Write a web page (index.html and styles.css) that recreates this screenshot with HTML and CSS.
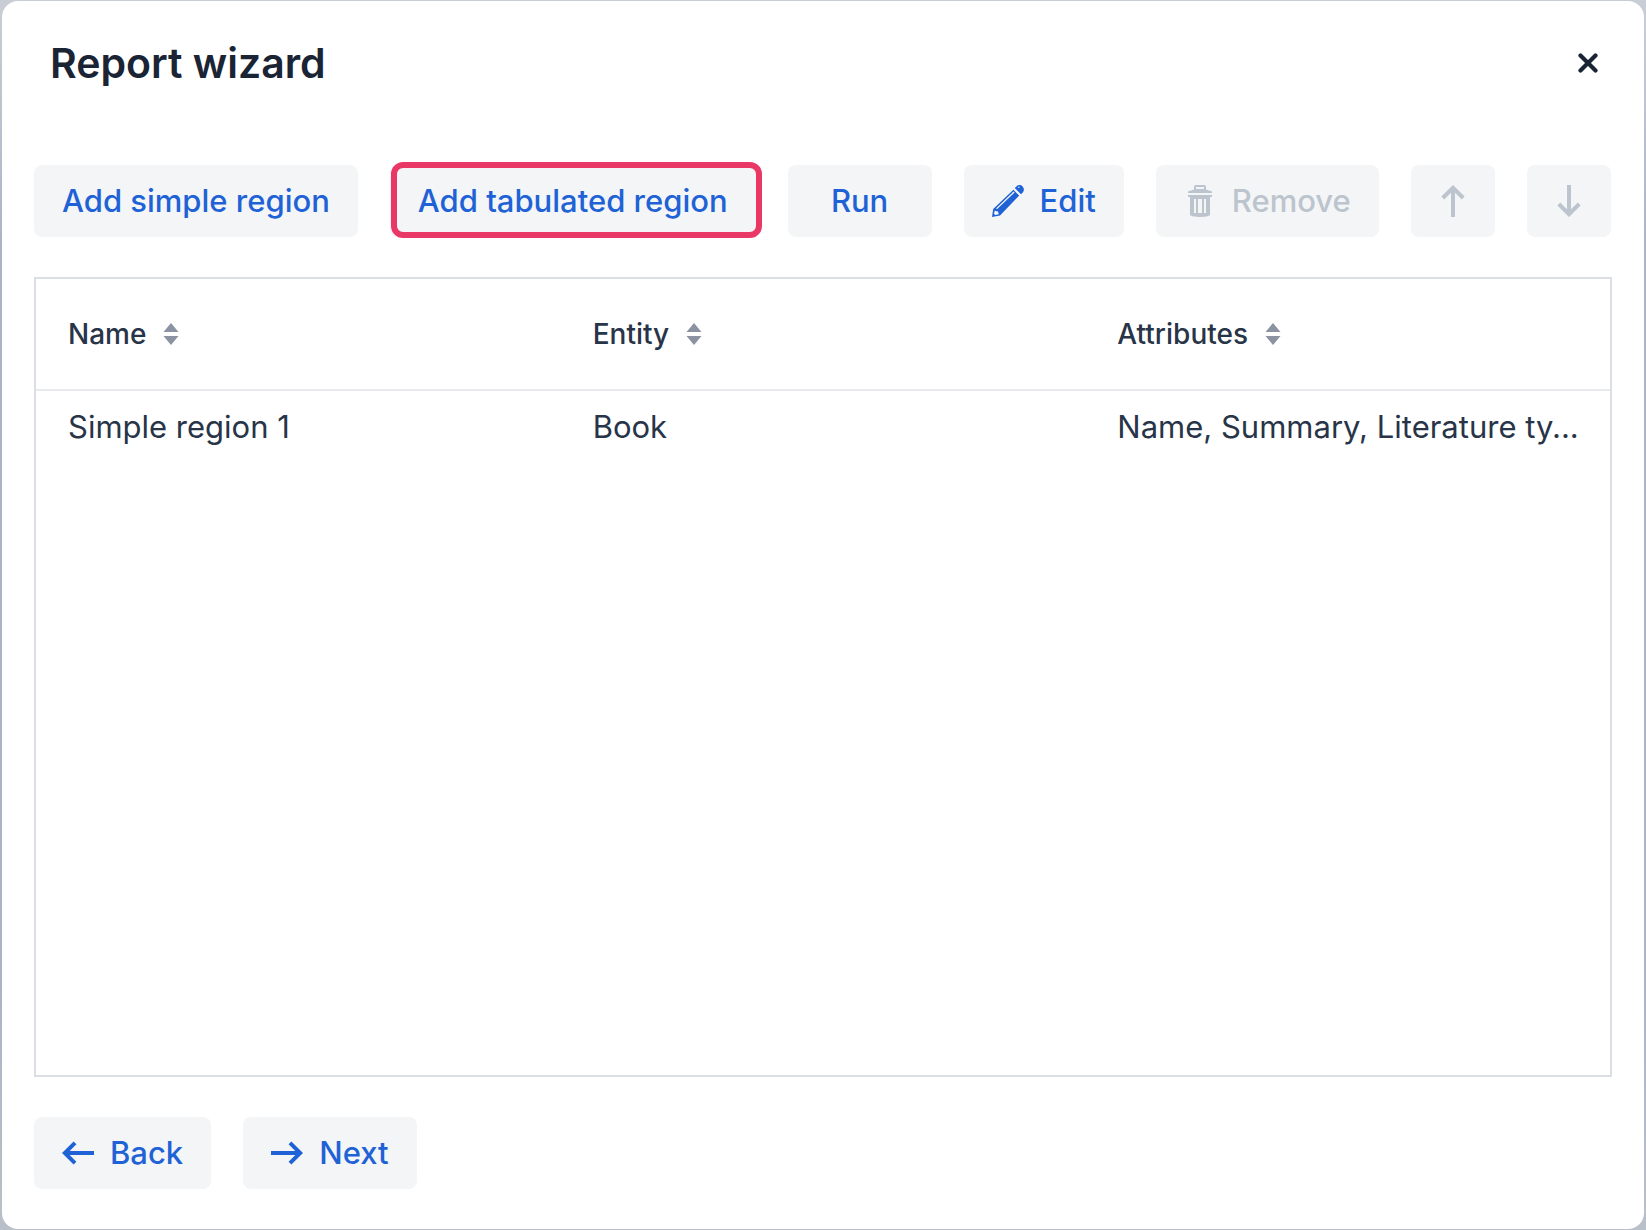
FILE: index.html
```
<!DOCTYPE html>
<html lang="en">
<head>
<meta charset="utf-8">
<meta name="viewport" content="width=device-width, initial-scale=1">
<title>Report wizard</title>
<link rel="stylesheet" href="styles.css">
</head>
<body>
<main class="dialog" role="dialog" aria-labelledby="dialog-title">
  <header class="dialog-header">
    <h1 class="dialog-title" id="dialog-title">Report wizard</h1>
    <button class="close" type="button" aria-label="Close">
      <svg class="close-icon" viewBox="0 0 20 20" aria-hidden="true"><path d="M2.500 2.500L17.500 17.500M17.500 2.500L2.500 17.500" fill="none" stroke="currentColor" stroke-width="4.200" stroke-linecap="round"/></svg>
    </button>
  </header>

  <div class="toolbar">
    <button class="button" type="button">Add simple region</button>
    <button class="button highlighted" type="button">Add tabulated region</button>
    <button class="button" type="button">Run</button>
    <button class="button" type="button">
      <svg class="icon" viewBox="0 0 16 16" aria-hidden="true"><path fill="currentColor" fill-rule="evenodd" d="M0 16L.6 12L10.700 2.400L13.600 5.300L4 15.300ZM1.400 12.700L1 14.400L1.600 15L3.400 14.600L3 13.200L1.900 13ZM2 11.800L2.600 12L11.300 3.800L10.800 3.300Z"/><path fill="currentColor" fill-rule="evenodd" d="M11.400 1.500L12.300 .6C13.200-.2 14.500 -.1 15.300 .8C16.100 1.600 16.200 2.800 15.400 3.700L14.500 4.600ZM13 1.400L13.900 1.200L13.600 .7L12.900 1Z"/></svg>
      Edit
    </button>
    <button class="button" type="button" disabled>
      <svg class="icon" viewBox="0 0 16 16" aria-hidden="true"><path fill="currentColor" fill-rule="evenodd" d="M2 5H14V6H13V15C12 16.300 4 16.300 3 15V6H2ZM5 7V14H6V7ZM7 7V14H9V7ZM10 7V14H11V7Z"/><path fill="currentColor" fill-rule="evenodd" d="M2 4V3.200L5 2.200V1Q5 0 6 0H10Q11 0 11 1V2.200L14 3.200V4ZM6 2H10V1H6Z"/></svg>
      Remove
    </button>
    <button class="button icon-only" type="button" aria-label="Move up" disabled>
      <svg class="icon" viewBox="0 0 16 16" aria-hidden="true"><path fill="none" stroke="currentColor" stroke-width="2" d="M8 16V1.400M2.900 6.500L8 1.400L13.100 6.500"/></svg>
    </button>
    <button class="button icon-only" type="button" aria-label="Move down" disabled>
      <svg class="icon" viewBox="0 0 16 16" aria-hidden="true"><path fill="none" stroke="currentColor" stroke-width="2" d="M8 0V14.600M2.900 9.500L8 14.600L13.100 9.500"/></svg>
    </button>
  </div>

  <div class="grid">
    <table class="regions">
      <thead>
        <tr>
          <th scope="col"><span class="sorter">Name <svg class="sort-icon" viewBox="0 0 16 22" aria-hidden="true"><path fill="currentColor" d="M8 0L15.500 9H.5ZM8 22L.5 13H15.500Z"/></svg></span></th>
          <th scope="col"><span class="sorter">Entity <svg class="sort-icon" viewBox="0 0 16 22" aria-hidden="true"><path fill="currentColor" d="M8 0L15.500 9H.5ZM8 22L.5 13H15.500Z"/></svg></span></th>
          <th scope="col"><span class="sorter">Attributes <svg class="sort-icon" viewBox="0 0 16 22" aria-hidden="true"><path fill="currentColor" d="M8 0L15.500 9H.5ZM8 22L.5 13H15.500Z"/></svg></span></th>
        </tr>
      </thead>
      <tbody>
        <tr>
          <td>Simple region 1</td>
          <td>Book</td>
          <td>Name, Summary, Literature ty...</td>
        </tr>
      </tbody>
    </table>
  </div>

  <footer class="dialog-footer">
    <button class="button" type="button">
      <svg class="icon" viewBox="0 0 16 16" aria-hidden="true"><path fill="none" stroke="currentColor" stroke-width="2" d="M16 8H1.400M6.500 2.900L1.400 8L6.500 13.100"/></svg>
      Back
    </button>
    <button class="button" type="button">
      <svg class="icon" viewBox="0 0 16 16" aria-hidden="true"><path fill="none" stroke="currentColor" stroke-width="2" d="M0 8H14.600M9.500 2.900L14.600 8L9.500 13.100"/></svg>
      Next
    </button>
  </footer>
</main>
</body>
</html>
```
FILE: styles.css
```
* {
  box-sizing: border-box;
}

body {
  display: flex;
  min-height: 100vh;
  margin: 0;
  padding: 1px 2px;
  background: linear-gradient(#c9ced6, #acb3c5 20%, #acb3c5 80%, #b9c0c9);
  color: #283447;
  font-family: Inter, "Liberation Sans", sans-serif;
  font-size: 31px;
  line-height: 40px;
}

.dialog {
  display: flex;
  flex: 1;
  flex-direction: column;
  min-width: 0;
  padding: 24px 32px 40px;
  border-radius: 16px;
  background: #fff;
}

.dialog-header {
  display: flex;
  align-items: center;
  justify-content: space-between;
  height: 76px;
  padding: 0 0 0 16px;
}

.dialog-title {
  margin: 0;
  color: #1a2434;
  font-size: 41px;
  font-weight: 600;
  line-height: 56px;
}

.close {
  display: flex;
  align-items: center;
  justify-content: center;
  width: 48px;
  height: 48px;
  padding: 0;
  border: 0;
  background: none;
  color: #1a2434;
}

.close-icon {
  width: 20px;
  height: 20px;
}

.toolbar {
  display: flex;
  gap: 32px;
  margin-top: 64px;
}

.button {
  position: relative;
  display: flex;
  align-items: center;
  justify-content: center;
  gap: 16px;
  min-width: 144px;
  height: 72px;
  padding: 0 28px;
  border: 0;
  border-radius: 8px;
  background: #f3f5f7;
  color: #1f62d6;
  font: inherit;
  font-weight: 500;
  white-space: nowrap;
}

.icon-only {
  min-width: 84px;
  padding: 0 26px;
}

.button:disabled {
  color: #bcc4cd;
}

.highlighted::after {
  position: absolute;
  inset: -3px -6px -1px 1px;
  border: 6px solid #e93866;
  border-radius: 12px;
  content: "";
}

.icon {
  flex: none;
  width: 32px;
  height: 32px;
}

.grid {
  flex: 1;
  margin: 40px 0;
  border: 2px solid #dbdfe4;
}

.regions {
  width: 100%;
  border-collapse: collapse;
  table-layout: fixed;
}

.regions th,
.regions td {
  padding: 0 32px;
  overflow: hidden;
  text-align: left;
  white-space: nowrap;
}

.regions th {
  height: 111px;
  border-bottom: 2px solid #e8eaed;
  font-size: 28px;
  font-weight: 500;
}

.regions td {
  height: 72px;
}

.sorter {
  display: flex;
  align-items: center;
  gap: 17px;
}

.sort-icon {
  width: 16px;
  height: 22px;
  color: #8b92a2;
}

.dialog-footer {
  display: flex;
  gap: 32px;
}
```
